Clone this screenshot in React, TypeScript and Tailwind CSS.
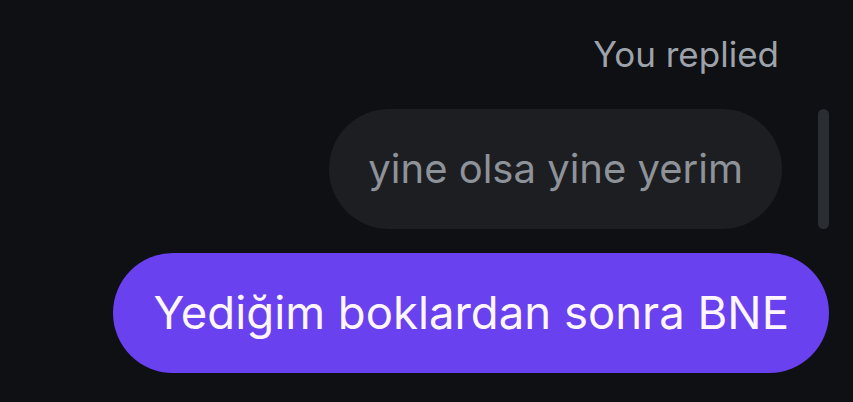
export default function App() {
  return (
    <div
      className="flex h-[402px] w-full flex-col items-end overflow-hidden bg-[#0e1014] pr-6"
      style={{ fontFamily: "Inter, 'Noto Sans', sans-serif" }}
    >
      <div className="mt-[32px] pr-[50px] text-[35px] leading-[44px] text-[#9ea3ab]">
        You replied
      </div>
      <div className="mt-[33px] flex items-center gap-[36px]">
        <div className="flex h-[120px] items-center rounded-full bg-[#1c1e22] px-[39px] text-[40px] text-[#8e9299]">
          yine olsa yine yerim
        </div>
        <div className="h-[120px] w-[11px] rounded-full bg-[#2a2d32]" />
      </div>
      <div className="mt-[24px] flex h-[120px] items-center rounded-full bg-[#6941ef] px-[40px] text-[45.5px] text-[#fdf6ff]">
        Yediğim boklardan sonra BNE
      </div>
    </div>
  );
}
